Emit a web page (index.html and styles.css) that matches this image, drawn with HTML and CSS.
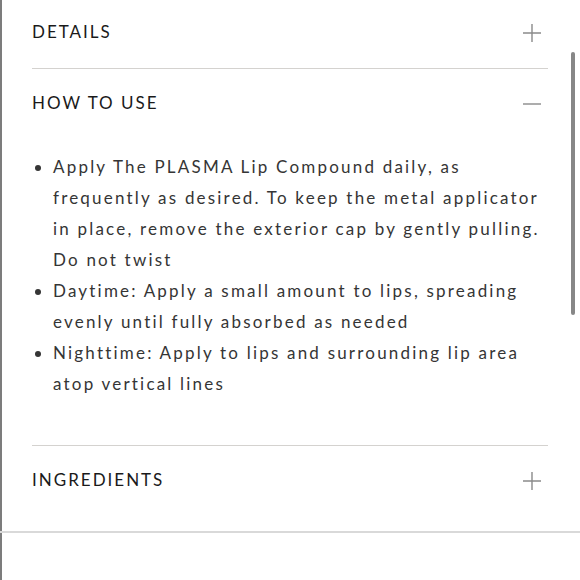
FILE: index.html
```html
<!DOCTYPE html>
<html>
<head>
<meta charset="utf-8">
<link rel="stylesheet" href="styles.css">
</head>
<body>
<div class="page">
  <div class="accordion">
    <div class="item">
      <div class="header header-first">
        <span class="title">DETAILS</span>
        <svg class="icon" viewBox="0 0 18 18" width="18" height="18"><path d="M9 0V18M0 9H18" stroke="#8a8a8a" stroke-width="1.4" fill="none"/></svg>
      </div>
    </div>
    <div class="item">
      <div class="header">
        <span class="title">HOW TO USE</span>
        <svg class="icon" viewBox="0 0 18 18" width="18" height="18"><path d="M0 9H18" stroke="#8a8a8a" stroke-width="1.4" fill="none"/></svg>
      </div>
      <ul class="content">
        <li>Apply The PLASMA Lip Compound daily, as frequently as desired. To keep the metal applicator in place, remove the exterior cap by gently pulling. Do not twist</li>
        <li>Daytime: Apply a small amount to lips, spreading evenly until fully absorbed as needed</li>
        <li>Nighttime: Apply to lips and surrounding lip area atop vertical lines</li>
      </ul>
    </div>
    <div class="item item-last">
      <div class="header">
        <span class="title">INGREDIENTS</span>
        <svg class="icon" viewBox="0 0 18 18" width="18" height="18"><path d="M9 0V18M0 9H18" stroke="#8a8a8a" stroke-width="1.4" fill="none"/></svg>
      </div>
    </div>
  </div>
  <div class="spacer"></div>
  <div class="bottom-rule"></div>
</div>
<div class="scrollbar"></div>
</body>
</html>
```

FILE: styles.css
```css
html, body {
  margin: 0;
  padding: 0;
  background: #ffffff;
}
body {
  font-family: Lato, "Open Sans", sans-serif;
  color: #1c1c1c;
}
.page {
  min-height: 580px;
  border-left: 2px solid #7c7c7c;
  box-sizing: border-box;
}
.accordion {
  padding: 0 30px 0 30px;
}
.item {
  border-bottom: 1px solid #d4d2cf;
  margin-right: 2px;
}
.item-last {
  border-bottom: none;
}
.header {
  height: 66px;
  display: flex;
  align-items: center;
  justify-content: space-between;
  padding-right: 7px;
}
.header-first {
  height: 62px;
  padding-bottom: 6px;
}
.title {
  font-size: 17px;
  letter-spacing: 2px;
  color: #1a1a1a;
}
.icon {
  display: block;
  margin-top: 4px;
}
.content {
  margin: 0;
  padding: 16px 0 46px 21px;
  font-size: 17px;
  line-height: 31px;
  letter-spacing: 2.2px;
  color: #353535;
  list-style: disc;
}
.spacer {
  height: 19px;
}
.bottom-rule {
  height: 2px;
  background: #d9d9d9;
  margin-left: -2px;
}
.scrollbar {
  position: absolute;
  left: 571px;
  top: 52px;
  width: 4px;
  height: 263px;
  border-radius: 2px;
  background: #878787;
}
```
